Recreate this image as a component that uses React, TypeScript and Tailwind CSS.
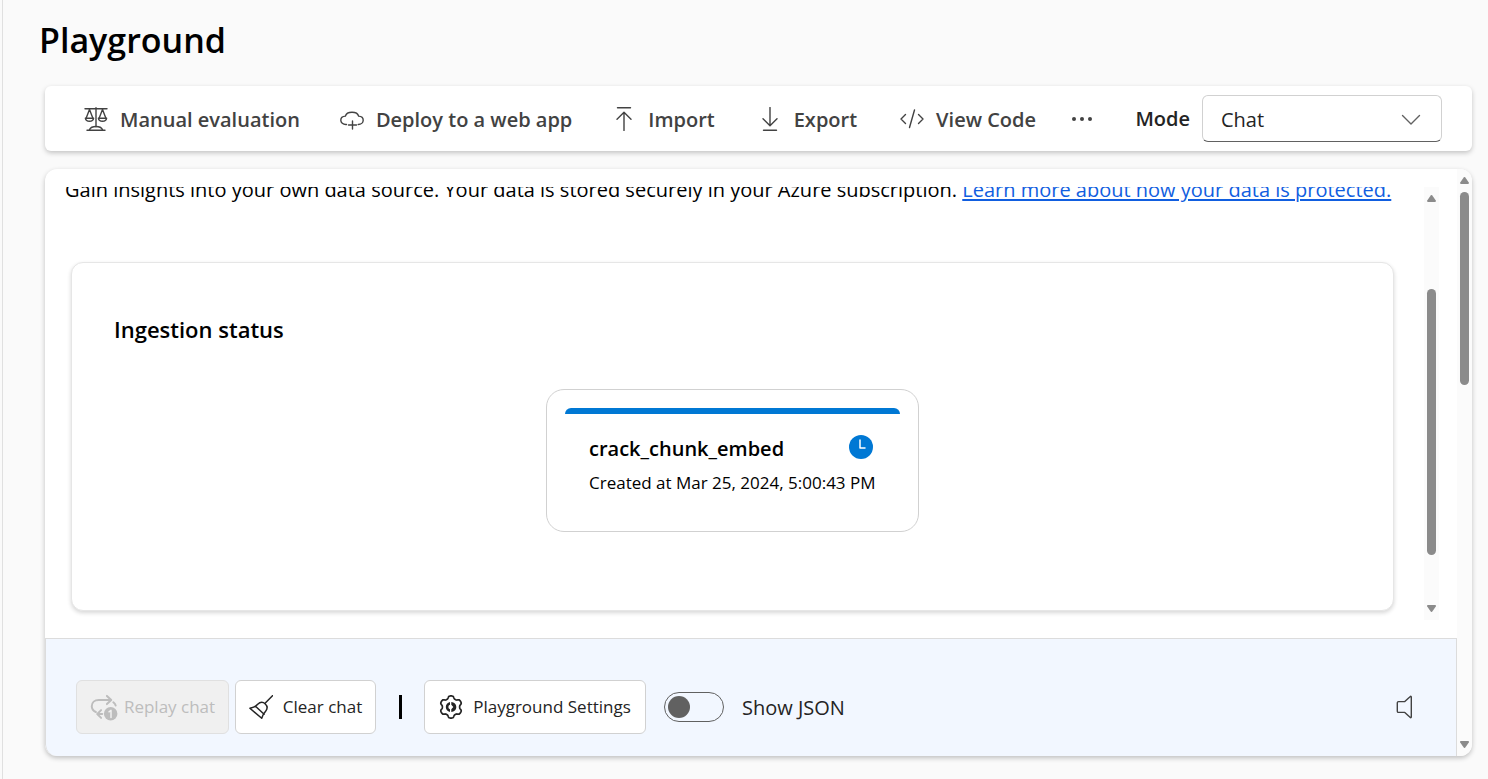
import type { ReactNode } from "react";

function Icon({ children, className = "h-6 w-6" }: { children: ReactNode; className?: string }) {
  return (
    <svg
      viewBox="0 0 24 24"
      fill="none"
      stroke="currentColor"
      strokeWidth="1.4"
      strokeLinecap="round"
      strokeLinejoin="round"
      aria-hidden="true"
      className={`shrink-0 ${className}`}
    >
      {children}
    </svg>
  );
}

const ScalesIcon = () => (
  <Icon>
    <path d="M1 1.800h22M12 .700v19M5.500 2.500 2.200 11M5.500 2.500l3.300 8.500M18.500 2.500l-3.300 8.500M18.500 2.500l3.300 8.500" />
    <path d="M1.400 11.300h8.200c-.3 1.900-1.800 2.900-4.100 2.900s-3.800-1-4.100-2.900ZM14.400 11.300h8.200c-.3 1.900-1.800 2.900-4.100 2.900s-3.800-1-4.100-2.900Z" />
    <path d="M3 23.200h18M5.500 22.500c1-2 3.300-3 6.500-3s5.500 1 6.500 3" />
  </Icon>
);

const CloudIcon = () => (
  <Icon>
    <path d="M6.500 17.500H5.800C3 17.500.8 15.600.8 13.200c0-2.400 2-4 4.600-4.100C6 6.700 8.600 5.200 12 5.200s6 1.500 6.600 3.900c2.600.1 4.600 1.700 4.600 4.100 0 2.400-2.200 4.300-5 4.300" />
    <path d="M12.500 14v8M8.500 18h8" />
  </Icon>
);

const ImportIcon = () => (
  <Icon>
    <path d="M5.500 .800h13M12 23.500V5.500M5 12.300l7-7 7 7" />
  </Icon>
);

const ExportIcon = () => (
  <Icon>
    <path d="M5.500 23.300h13M12 .500v18M5 11.700l7 7 7-7" />
  </Icon>
);

const CodeIcon = () => (
  <Icon>
    <path d="M5.500 7.500 1 12l4.500 4.500M18.500 7.500 23 12l-4.500 4.500M14.500 3l-5 17.500" />
  </Icon>
);

const ReplayIcon = () => (
  <Icon className="h-7 w-7">
    <g strokeWidth="1.700">
      <path d="M5 16.300C2.900 15.300 1.500 13.500 1.500 11.300 1.500 8.200 4 6 7.500 6h10.500M14.500 2.500 18.200 6l-3.700 3.500M20 8c1 .8 1.700 1.700 2 2.800M9.500 14.700 6.200 18l3.300 3.300M6.500 18h4" />
    </g>
    <circle cx="17.700" cy="17.800" r="5.800" fill="currentColor" stroke="none" />
    <path d="M16.300 16.100l1.700-1.200v6" stroke="#f0f0f0" strokeWidth="1.300" />
  </Icon>
);

const BroomIcon = () => (
  <Icon>
    <path
      strokeWidth="1.500"
      d="M23.500 .7 16.300 8M.9 13.200c3.600-.5 5.900-1.600 7.800-3.900 2.300-2.200 5.400-2.400 7.600-.3 2.100 2 2.200 4.900.3 7.200-1.900 2.100-3.100 4-3.900 7.100L.9 13.200ZM6.500 11.200l8.600 8"
    />
  </Icon>
);

// Six-toothed outline: the radius swings between tooth tip and valley around the hub.
const gearOutline = Array.from({ length: 120 }, (_, i) => {
  const angle = (i / 120) * Math.PI * 2;
  const radius = 9.8 + 1.3 * Math.tanh(1.8 * Math.cos(6 * angle) + 0.3);
  return `${(12 + radius * Math.sin(angle)).toFixed(2)},${(12 - radius * Math.cos(angle)).toFixed(2)}`;
}).join(" ");

const SettingsIcon = () => (
  <Icon>
    <polygon points={gearOutline} strokeWidth="1.700" />
    <path
      fill="currentColor"
      stroke="none"
      d="M11 7.100v2.700a2.300 2.300 0 0 0 0 4.400v2.700C8.500 16.400 6.800 14.400 6.800 12S8.500 7.600 11 7.100ZM12.300 7c2.900.2 5 2.300 5 5s-2.100 4.800-5 5v-2.800l2-2.200-2-2.200Z"
    />
  </Icon>
);

const SpeakerIcon = () => (
  <Icon>
    <path d="M19.300 1.500c.4-.4 1-.1 1 .4v20.200c0 .5-.6.8-1 .4l-5.500-5.100H7.500c-.7 0-1.200-.5-1.200-1.200V7.800c0-.7.5-1.200 1.200-1.200h6.300l5.500-5.100Z" />
  </Icon>
);

function ToolbarButton({ icon, label }: { icon: ReactNode; label: string }) {
  return (
    <button type="button" className="flex items-center gap-3 px-5 text-[20px] leading-7 font-semibold whitespace-nowrap text-[#424242]">
      {icon}
      <span className="pt-[2px]">{label}</span>
    </button>
  );
}

function Arrow({ down = false }: { down?: boolean }) {
  return (
    <svg viewBox="0 0 9 7" aria-hidden="true" className={`h-[7px] w-[9px] shrink-0 fill-[#8b8b8b] ${down ? "rotate-180" : ""}`}>
      <path d="M3.700.5a1 1 0 0 1 1.600 0l3.500 5c.4.700 0 1.500-.8 1.500H1C.2 7-.2 6.200.2 5.500Z" />
    </svg>
  );
}

function ChatCard() {
  return (
    <section className="mt-[58px] mr-[30px] ml-[6px] flex h-[349px] shrink-0 flex-col rounded-xl border border-[#e6e6e6] bg-white px-[42px] shadow-[0_2px_4px_rgba(0,0,0,0.16)]">
      <h2 className="mt-[50px] text-[22px] leading-8 font-semibold text-black">Ingestion status</h2>
      <article className="mt-11 h-[143px] w-[373px] self-center rounded-[18px] border border-[#d1d1d1] px-[18px] pt-[18px]">
        <div className="h-[6px] rounded-t-md bg-[#0078d4]" />
        <div className="mt-[21px] flex items-center justify-between pr-[27px] pl-6">
          <h3 className="text-[20px] leading-7 font-semibold text-black">crack_chunk_embed</h3>
          <svg viewBox="0 0 24 24" role="img" aria-label="In progress" className="mb-1 h-6 w-6 shrink-0">
            <circle cx="12" cy="12" r="12" fill="#0078d4" />
            <path d="M11 5v8h5" fill="none" stroke="#fff" strokeWidth="1.500" strokeLinecap="round" strokeLinejoin="round" />
          </svg>
        </div>
        <p className="mt-2 pl-6 text-[17px] leading-6 whitespace-nowrap text-black">Created at Mar 25, 2024, 5:00:43 PM</p>
      </article>
    </section>
  );
}

export default function App() {
  return (
    <div className="min-h-screen bg-[#fafafa] pl-[2px] font-['Open_Sans','Noto_Sans',sans-serif]">
      <main className="flex min-h-screen flex-col border-l border-[#e0e0e0] pr-4 pb-[23px] pl-[42px]">
        <h1 className="-ml-[6px] pt-[15px] pb-px text-[34px] leading-[50px] font-semibold text-black">Playground</h1>

        <header className="mt-5 flex h-[65px] items-center rounded-md bg-white pr-[30px] pl-[19px] shadow-[0_2px_5px_rgba(0,0,0,0.22)]">
          <ToolbarButton icon={<ScalesIcon />} label="Manual evaluation" />
          <ToolbarButton icon={<CloudIcon />} label="Deploy to a web app" />
          <div className="flex items-center gap-[3px]">
            <ToolbarButton icon={<ImportIcon />} label="Import" />
            <ToolbarButton icon={<ExportIcon />} label="Export" />
            <ToolbarButton icon={<CodeIcon />} label="View Code" />
          </div>
          <button type="button" aria-label="More options" className="px-4 text-[#424242]">
            <svg viewBox="0 0 20 4" aria-hidden="true" className="h-1 w-5 fill-current">
              <circle cx="2" cy="2" r="2" />
              <circle cx="10" cy="2" r="2" />
              <circle cx="18" cy="2" r="2" />
            </svg>
          </button>
          <div className="ml-auto flex items-center gap-3">
            <label htmlFor="mode" className="text-[20px] leading-7 font-semibold text-[#242424]">Mode</label>
            <div className="relative">
              <select
                id="mode"
                className="h-[47px] w-60 appearance-none rounded-md border border-[#d1d1d1] border-b-[#616161] bg-white pt-[2px] pl-[18px] text-[20px] text-[#242424]"
              >
                <option>Chat</option>
              </select>
              <svg viewBox="0 0 20 12" fill="none" stroke="#616161" strokeWidth="1.400" aria-hidden="true" className="pointer-events-none absolute top-[19px] right-[21px] h-3 w-5">
                <path d="m1.500 1.500 8.500 8.500 8.500-8.500" strokeLinecap="round" strokeLinejoin="round" />
              </svg>
            </div>
          </div>
        </header>

        <div className="mt-[18px] flex flex-1 overflow-hidden rounded-xl bg-white shadow-[0_2px_5px_rgba(0,0,0,0.24)]">
          <div className="flex min-w-0 flex-1 flex-col">
            <div className="flex flex-1 pt-[18px] pr-[18px] pb-[18px]">
              <div className="flex h-[433px] min-w-0 flex-1 flex-col overflow-hidden pl-5">
                <p className="-mt-[11px] shrink-0 text-[20px] leading-7 whitespace-nowrap text-black">
                  Gain insights into your own data source. Your data is stored securely in your Azure subscription.{" "}
                  <a href="#protection" className="text-[#115ee0] underline decoration-2 underline-offset-2">
                    Learn more about how your data is protected.
                  </a>
                </p>
                <ChatCard />
              </div>
              <div aria-hidden="true" className="flex w-[15px] flex-col items-center bg-[#fbfbfb] py-2">
                <Arrow />
                <div className="mt-[87px] h-[266px] w-[9px] rounded-full bg-[#8b8b8b]" />
                <div className="flex-1" />
                <Arrow down />
              </div>
            </div>

            <footer className="flex h-[118px] items-center rounded-bl-xl border-t border-r border-l border-[#dcdcdc] bg-[#f2f7ff] pt-[19px] pr-[41px] pl-[30px] text-[#242424]">
              <button type="button" disabled className="flex h-[54px] w-[153px] items-center justify-center gap-[6px] rounded-md border border-[#e0e0e0] bg-[#f0f0f0] text-[17px] whitespace-nowrap text-[#bdbdbd]">
                <ReplayIcon />
                Replay chat
              </button>
              <button type="button" className="ml-[6px] flex h-[54px] w-[141px] items-center justify-center gap-[10px] rounded-md border border-[#d1d1d1] bg-white text-[17px] whitespace-nowrap">
                <BroomIcon />
                Clear chat
              </button>
              <div aria-hidden="true" className="mr-[22px] ml-[23px] h-6 w-[3px] bg-black" />
              <button type="button" className="flex h-[54px] w-[222px] items-center justify-center gap-[10px] rounded-md border border-[#d1d1d1] bg-white text-[17px] whitespace-nowrap">
                <SettingsIcon />
                Playground Settings
              </button>
              <input
                id="show-json"
                type="checkbox"
                role="switch"
                className="ml-[18px] flex h-[30px] w-[60px] appearance-none items-center rounded-full border border-[#616161] px-[3px] before:h-[22px] before:w-[22px] before:rounded-full before:bg-[#616161] checked:justify-end"
              />
              <label htmlFor="show-json" className="ml-[18px] pt-[2px] text-[20px] leading-7 whitespace-nowrap">Show JSON</label>
              <button type="button" aria-label="Speaker" className="ml-auto text-[#424242]">
                <SpeakerIcon />
              </button>
            </footer>
          </div>
          <div aria-hidden="true" className="flex w-[15px] flex-col items-center bg-[#fbfbfb] py-2">
            <Arrow />
            <div className="mt-2 h-[193px] w-[9px] rounded-full bg-[#8b8b8b]" />
            <div className="flex-1" />
            <Arrow down />
          </div>
        </div>
      </main>
    </div>
  );
}
